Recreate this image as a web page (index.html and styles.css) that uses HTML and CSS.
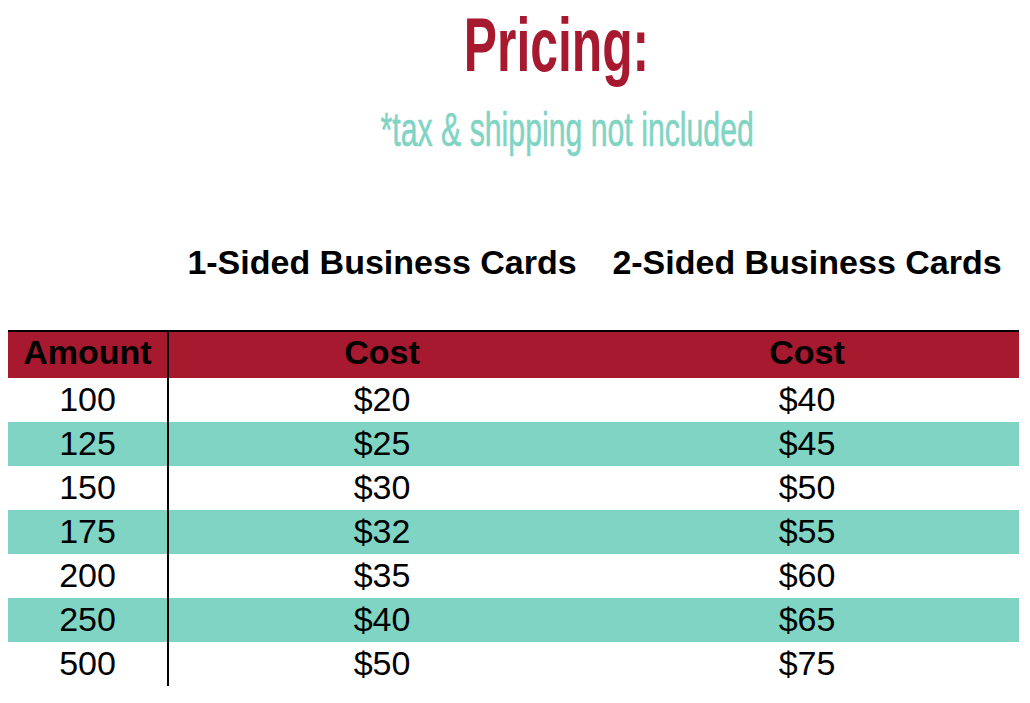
FILE: index.html
```html
<!DOCTYPE html>
<html>
<head>
<meta charset="utf-8">
<link rel="stylesheet" href="styles.css">
</head>
<body>
<header class="intro">
  <h1 class="title"><span>Pricing:</span></h1>
  <p class="note"><span>*tax &amp; shipping not included</span></p>
</header>
<div class="col-heads">
  <div></div>
  <div class="col-head">1-Sided Business Cards</div>
  <div class="col-head">2-Sided Business Cards</div>
</div>
<table class="prices">
  <thead>
    <tr><th class="amt">Amount</th><th>Cost</th><th>Cost</th></tr>
  </thead>
  <tbody>
    <tr><td class="amt">100</td><td>$20</td><td>$40</td></tr>
    <tr class="alt"><td class="amt">125</td><td>$25</td><td>$45</td></tr>
    <tr><td class="amt">150</td><td>$30</td><td>$50</td></tr>
    <tr class="alt"><td class="amt">175</td><td>$32</td><td>$55</td></tr>
    <tr><td class="amt">200</td><td>$35</td><td>$60</td></tr>
    <tr class="alt"><td class="amt">250</td><td>$40</td><td>$65</td></tr>
    <tr><td class="amt">500</td><td>$50</td><td>$75</td></tr>
  </tbody>
</table>
</body>
</html>
```
FILE: styles.css
```css
html, body { margin: 0; padding: 0; background: #fff; }
body { font-family: "Liberation Sans", Arial, sans-serif; color: #000; width: 1030px; }

.intro { padding-left: 82px; text-align: center; }
.title { margin: 0; height: 90px; font-family: "Liberation Sans", sans-serif; font-weight: 700; font-size: 76px; line-height: 90px; color: #a6192e; }
.title span { display: inline-block; transform: scaleX(0.655); }
.note { margin: 0; height: 80px; font-family: "Liberation Sans", sans-serif; font-weight: 400; font-size: 48px; line-height: 80px; color: #7fd4c4; padding-left: 22px; }
.note span { display: inline-block; transform: scaleX(0.63); -webkit-text-stroke: 0.6px #7fd4c4; }

.col-heads { display: grid; grid-template-columns: 161px 426px 424px; margin-left: 8px; margin-top: 72px; height: 88px; }
.col-head { text-align: center; font-weight: 700; font-size: 34px; line-height: 40px; }

.prices { margin-left: 8px; border-collapse: collapse; width: 1011px; table-layout: fixed; border-top: 2px solid #000; }
.prices th, .prices td { padding: 0 0 2px; text-align: center; height: 42px; font-size: 34px; line-height: 42px; }
.prices th { background: #a6192e; font-weight: 700; height: 40px; line-height: 40px; padding-bottom: 6px; }
.prices .amt { width: 159px; border-right: 2px solid #000; }
.prices th:nth-child(2), .prices td:nth-child(2) { width: 426px; }
.prices tr.alt td { background: #7fd4c4; }
```
